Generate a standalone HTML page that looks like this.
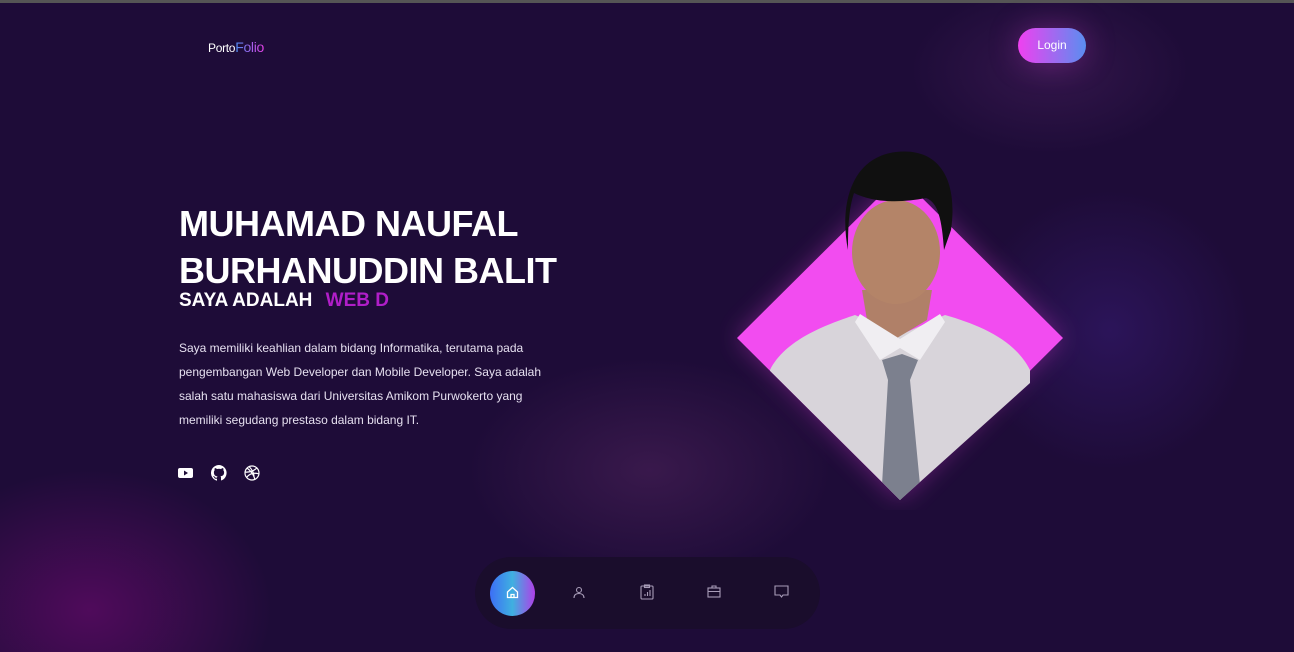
<!DOCTYPE html>
<html><head><style>
*{margin:0;padding:0;box-sizing:border-box}
body{width:1294px;height:652px;overflow:hidden;font-family:"Liberation Sans",sans-serif;color:#fff;
background:
radial-gradient(ellipse 260px 200px at 90px 610px,rgba(120,10,120,.55),transparent 70%),
radial-gradient(ellipse 260px 160px at 650px 470px,rgba(90,40,100,.45),transparent 70%),
radial-gradient(ellipse 200px 200px at 1110px 330px,rgba(60,30,130,.45),transparent 70%),
radial-gradient(ellipse 200px 120px at 1050px 70px,rgba(90,40,110,.35),transparent 70%),
#1e0c38;position:relative}
.top{position:absolute;top:0;left:0;right:0;height:3px;background:#555}
.logo{position:absolute;left:208px;top:39px;font-size:12px;letter-spacing:-.3px}
.logo b{font-weight:normal;font-size:14px;background:linear-gradient(90deg,#4b8df0,#e63fe6);-webkit-background-clip:text;color:transparent}
.login{position:absolute;left:1018px;top:28px;width:68px;height:35px;border-radius:18px;background:linear-gradient(90deg,#f040f0,#5a8ef0);font-size:12px;text-align:center;line-height:35px;box-shadow:0 0 30px rgba(200,60,200,.35)}
h1{position:absolute;left:179px;top:200px;font-size:36px;line-height:47px;font-weight:bold;letter-spacing:-.5px}
.sub{position:absolute;left:179px;top:290px;font-size:19px;font-weight:bold}
.sub span{color:#b01ec8;margin-left:8px}
p{position:absolute;left:179px;top:336px;width:380px;font-size:12px;line-height:24px;color:#e6e0f0}
.soc{position:absolute;top:465px}
.nav{position:absolute;left:475px;top:557px;width:345px;height:72px;border-radius:36px;background:#1a0d2c}
.home{position:absolute;left:15px;top:14px;width:45px;height:45px;border-radius:50%;background:linear-gradient(90deg,#3d6ff5,#3fb0e0,#b040e8)}
.nav svg{position:absolute}
</style></head><body>
<div class="top"></div>
<div class="logo">Porto<b>Folio</b></div>
<div class="login">Login</div>
<h1>MUHAMAD NAUFAL<br>BURHANUDDIN BALIT</h1>
<div class="sub">SAYA ADALAH <span>WEB D</span></div>
<p>Saya memiliki keahlian dalam bidang Informatika, terutama pada pengembangan Web Developer dan Mobile Developer. Saya adalah salah satu mahasiswa dari Universitas Amikom Purwokerto yang memiliki segudang prestaso dalam bidang IT.</p>
<svg class="soc" style="left:178px" width="15" height="16" viewBox="0 0 15 16"><rect x="0" y="3" width="15" height="10" rx="2" fill="#fff"/><path d="M6 5.5v5l4-2.5z" fill="#1e0c38"/></svg>
<svg class="soc" style="left:211px" width="16" height="16" viewBox="0 0 16 16"><path fill="#fff" d="M8 0a8 8 0 0 0-2.5 15.6c.4 0 .5-.2.5-.4v-1.5c-2.2.5-2.7-1-2.7-1-.4-.9-.9-1.200-.9-1.2-.7-.5.1-.5.1-.5.8.1 1.2.8 1.2.8.7 1.3 1.9.9 2.3.7.1-.5.3-.9.5-1.1-1.8-.2-3.6-.9-3.6-4 0-.9.3-1.6.8-2.1-.1-.2-.4-1 .1-2.1 0 0 .7-.2 2.2.8a7.4 7.4 0 0 1 4 0c1.5-1 2.2-.8 2.2-.8.4 1.1.2 1.9.1 2.1.5.6.8 1.3.8 2.1 0 3.1-1.9 3.700-3.6 3.9.3.3.5.8.5 1.5v2.2c0 .2.1.5.6.4A8 8 0 0 0 8 0z"/></svg>
<svg class="soc" style="left:244px" width="16" height="16" viewBox="0 0 16 16" fill="none" stroke="#fff" stroke-width="1.2"><circle cx="8" cy="8" r="7"/><path d="M3 3c4 3 7 7 8 12M1.2 7c4 .5 9-1 12-4.5M5 1.5c3 3 5 7 5 10M2.5 12.5c3-4 7-5 12.3-3.7"/></svg>
<svg style="position:absolute;left:720px;top:140px" width="360" height="370" viewBox="720 140 360 370">
<defs><filter id="g"><feGaussianBlur stdDeviation="12"/></filter></defs>
<polygon points="900,176 1063,338 900,500 737,338" fill="#f040e8" opacity=".35" filter="url(#g)"/>
<polygon points="900,176 1063,338 900,500 737,338" fill="#f24cf0"/>
<clipPath id="c"><path d="M720 140H1080V338L900 500 737 338 720 330z"/></clipPath>
<g clip-path="url(#c)">
<path d="M770 370c15-30 55-45 85-55l45 20 45-20c35 10 70 25 85 55v150H770z" fill="#d8d4da"/>
<path d="M862 290h70l-5 30-30 18-30-18z" fill="#b08068"/>
<path d="M882 360l20-6 16 6-8 20 10 105-20 25-18-25 6-105z" fill="#7c808e"/>
<path d="M855 322l25 38 20-12 20 12 25-38-5-8-40 25-40-25z" fill="#f0eef2"/>
<ellipse cx="896" cy="252" rx="44" ry="52" fill="#b48468"/>
<path d="M848 250c-8-40 0-92 48-98 45-5 62 30 55 78l-7 20c-2-30-6-48-18-52-25 5-52 5-72-5-5 15-6 32-6 57z" fill="#101010"/>
</g>
</svg>
<div class="nav">
<div class="home"></div>
<svg style="left:31px;top:29px" width="13" height="13" viewBox="0 0 13 13" fill="none" stroke="#fff" stroke-width="1.3"><path d="M1.5 6L6.5 1.5 11.5 6v5.5h-10z M5 11.5v-3h3v3"/></svg>
<svg style="left:98px;top:29px" width="12" height="13" viewBox="0 0 12 13" fill="none" stroke="#a89cb8" stroke-width="1.1"><circle cx="6" cy="4" r="2.5"/><path d="M1 12c0-3 2-4.5 5-4.5s5 1.5 5 4.5"/></svg>
<svg style="left:165px;top:27px" width="14" height="16" viewBox="0 0 14 16" fill="none" stroke="#a89cb8" stroke-width="1.1"><rect x="1" y="2" width="12" height="13" rx="1"/><rect x="4.5" y="1" width="5" height="2.5"/><path d="M5 12v-2M7.5 12v-4M10 12v-6"/></svg>
<svg style="left:232px;top:28px" width="14" height="13" viewBox="0 0 14 13" fill="none" stroke="#a89cb8" stroke-width="1.1"><rect x="1" y="3" width="12" height="9"/><path d="M5 3V1h4v2M1 6.5h12"/></svg>
<svg style="left:299px;top:28px" width="15" height="14" viewBox="0 0 15 14" fill="none" stroke="#a89cb8" stroke-width="1.1"><path d="M1 1h13v9H9l-1.5 2L6 10H1z"/></svg>
</div>
</body></html>
